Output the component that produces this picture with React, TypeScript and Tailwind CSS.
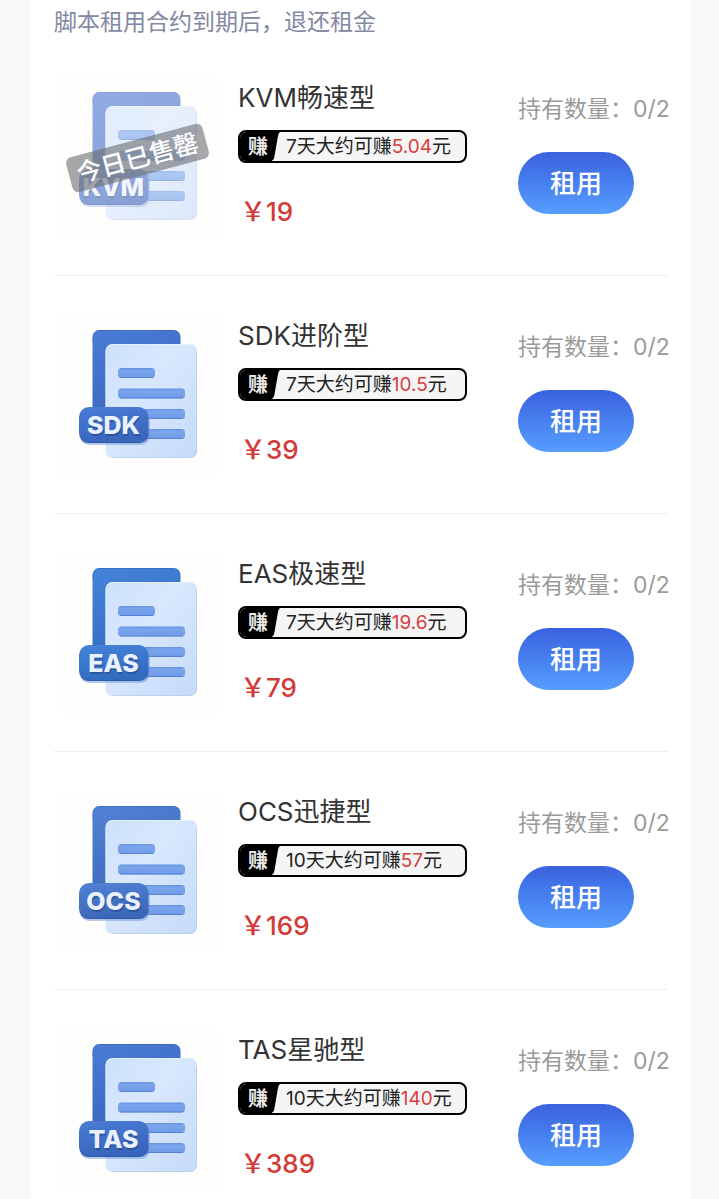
import { useId } from 'react';

interface Plan {
  code: string;
  suffix: string;
  days: number;
  earn: string;
  price: number;
  owned: number;
  limit: number;
  soldOut?: boolean;
  // cover / badge colours of the file icon
  from: string;
  to: string;
}

const plans: Plan[] = [
  { code: 'KVM', suffix: '畅速型', days: 7, earn: '5.04', price: 19, owned: 0, limit: 2, soldOut: true, from: '#4a74d0', to: '#3c62ba' },
  { code: 'SDK', suffix: '进阶型', days: 7, earn: '10.5', price: 39, owned: 0, limit: 2, from: '#4a7cd6', to: '#3a66bc' },
  { code: 'EAS', suffix: '极速型', days: 7, earn: '19.6', price: 79, owned: 0, limit: 2, from: '#4484da', to: '#326bc0' },
  { code: 'OCS', suffix: '迅捷型', days: 10, earn: '57', price: 169, owned: 0, limit: 2, from: '#5282d6', to: '#3c67b8' },
  { code: 'TAS', suffix: '星驰型', days: 10, earn: '140', price: 389, owned: 0, limit: 2, from: '#4a7cd6', to: '#3764bc' },
];

function FileIcon({ plan }: { plan: Plan }) {
  const id = useId();
  return (
    <svg viewBox="0 0 168 168" className={plan.soldOut ? 'size-full opacity-60' : 'size-full'} role="img" aria-label={plan.code}>
      <defs>
        <linearGradient id={`${id}cover`} x1="0" y1="0" x2="0.3" y2="1">
          <stop offset="0" stopColor={plan.from} />
          <stop offset="1" stopColor={plan.to} />
        </linearGradient>
        <linearGradient id={`${id}page`} x1="0" y1="0" x2="1" y2="1">
          <stop offset="0" stopColor="#cde1fc" />
          <stop offset="0.4" stopColor="#d8e8fd" />
          <stop offset="1" stopColor="#c6daf8" />
        </linearGradient>
        <linearGradient id={`${id}line`} x1="0" y1="0" x2="0" y2="1">
          <stop offset="0" stopColor="#6591e0" />
          <stop offset="0.25" stopColor="#7ba5ec" />
          <stop offset="1" stopColor="#6f9ae6" />
        </linearGradient>
      </defs>
      <rect x="4" y="3" width="161" height="161" fill="#fefefc" />
      <rect x="38.5" y="18" width="88" height="100" rx="7" fill={`url(#${id}cover)`} />
      <path d="M39 30v-5a6.500 6.500 0 0 1 6.500-6.500h74a6.500 6.500 0 0 1 6.500 6" fill="none" stroke="#3460b4" strokeOpacity="0.5" />
      <rect x="51.500" y="32" width="91.500" height="114" rx="7" fill={`url(#${id}page)`} />
      <path d="M52 139V39a6.500 6.500 0 0 1 6.500-6.500H136" fill="none" stroke="#e6f1ff" strokeOpacity="0.8" />
      <path d="M142.500 40v99a6.500 6.500 0 0 1-6.500 6.500H59" fill="none" stroke="#b4cdf2" strokeOpacity="0.8" />
      {[56, 76.5, 97, 117].map((y, i) => (
        <g key={y}>
          <rect x="64" y={y} width={i === 0 ? 37 : 67} height="10" rx="3.500" fill={`url(#${id}line)`} />
          <path d={`M66 ${y + 9.5}H${i === 0 ? 99 : 129}`} stroke="#4a78cc" strokeOpacity="0.7" />
        </g>
      ))}
      <rect x="26" y="97" width="70" height="36" rx="9" fill="#6d96dc" fillOpacity="0.5" />
      <rect x="25" y="95" width="69.500" height="36" rx="10" fill={`url(#${id}cover)`} />
      <path d="M27 127q2 3.500 7 3.500h51q9 0 9-9" fill="none" stroke="#2c549f" strokeOpacity="0.7" />
      <g fontSize="25" textAnchor="middle" className="font-[Inter] font-extrabold">
        <text x="60.500" y="123.500" fill="#234785" fillOpacity="0.6">{plan.code}</text>
        <text x="59.500" y="122" fill="#e9f1ff">{plan.code}</text>
      </g>
    </svg>
  );
}

function EarnTag({ plan }: { plan: Plan }) {
  return (
    <div className="mt-4 flex h-[33px] w-[229px] items-center overflow-hidden rounded-lg border-2 border-black bg-[#f5f5f5]">
      <div className="relative flex h-full w-[46px] shrink-0 items-center">
        <svg viewBox="0 0 46 29" className="absolute inset-0 size-full" aria-hidden="true">
          <path d="M0 0H40Q38.500 1 38 4L34.500 24Q34 28 31.500 29H0Z" fill="#000" />
        </svg>
        <span className="relative pl-2 text-[20px] leading-none font-bold text-[#e8e8e8]">赚</span>
      </div>
      <p className="text-[19px] leading-none whitespace-nowrap text-[#222]">
        {plan.days}天大约可赚<span className="text-[#d8403c]">{plan.earn}</span>元
      </p>
    </div>
  );
}

function PlanRow({ plan }: { plan: Plan }) {
  return (
    <li className="flex gap-4 border-b border-[#eeeeee] pt-9 pb-[33px]">
      <div className="relative size-[168px] shrink-0">
        <FileIcon plan={plan} />
        {plan.soldOut && (
          <div className="absolute inset-0 flex items-center justify-center">
            <span className="-rotate-15 rounded-md bg-[#6a6d72]/60 px-2 text-[25px] leading-9 font-medium whitespace-nowrap text-white">
              今日已售罄
            </span>
          </div>
        )}
      </div>
      <div className="min-w-0 flex-1 pt-2">
        <h2 className="text-[26px] leading-8 whitespace-nowrap text-[#333]">{plan.code}{plan.suffix}</h2>
        <EarnTag plan={plan} />
        <p className="mt-[33px] pl-0.5 text-[26px] leading-8 font-medium text-[#d33a38]">￥{plan.price}</p>
      </div>
      <div className="w-[150px] shrink-0 pt-5">
        <p className="text-[23px] leading-[30px] whitespace-nowrap text-[#9a9a9a]">
          持有数量：{plan.owned}/{plan.limit}
        </p>
        <button
          type="button"
          className="mt-7 h-[62px] w-[116px] rounded-full bg-linear-to-b from-[#3a62de] to-[#579dff] text-[26px] font-medium text-white"
        >
          租用
        </button>
      </div>
    </li>
  );
}

export default function App() {
  return (
    <div lang="zh-CN" className="min-h-screen bg-[#f8f8f8] pr-7 pl-[30px] font-[Inter,'Noto_Sans_CJK_SC',sans-serif]">
      <main className="min-h-screen bg-white pr-[23px] pl-6">
        <p className="pt-2 pb-px text-[23px] leading-[29px] text-[#8388a3]">脚本租用合约到期后，退还租金</p>
        <ul>
          {plans.map((plan) => (
            <PlanRow key={plan.code} plan={plan} />
          ))}
        </ul>
      </main>
    </div>
  );
}
